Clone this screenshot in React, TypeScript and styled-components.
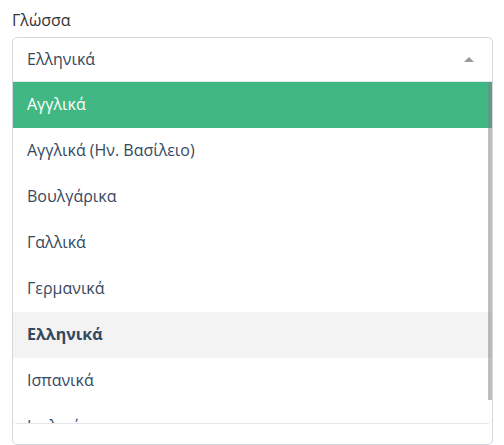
import React from "react";
import styled, { createGlobalStyle } from "styled-components";

const GlobalStyle = createGlobalStyle`
  html, body { margin: 0; padding: 0; background: #ffffff; }
  body { font-family: "Open Sans", "Noto Sans", sans-serif; }
`;

const Page = styled.div`
  width: 504px;
  height: 445px;
  box-sizing: border-box;
  padding: 10px 11px 0 12px;
  overflow: hidden;
`;

const Label = styled.label`
  display: block;
  font-size: 16px;
  line-height: 21px;
  color: #333333;
  margin-bottom: 6px;
`;

const Select = styled.div`
  position: relative;
  box-sizing: border-box;
  height: 408px;
  border: 1px solid #d3d8df;
  border-radius: 5px;
  display: flex;
  flex-direction: column;
`;

const Control = styled.div`
  height: 43px;
  box-sizing: border-box;
  flex: none;
  display: flex;
  align-items: center;
  justify-content: space-between;
  padding: 0 18px 2px 14px;
  border-bottom: 1px solid #e4e6ea;
  font-size: 16px;
  color: #35495e;
  height: 44px;
`;

const Caret = styled.span`
  width: 0;
  height: 0;
  margin-top: 2px;
  border-left: 5px solid transparent;
  border-right: 5px solid transparent;
  border-bottom: 5px solid #999999;
`;

const ListBox = styled.div`
  position: relative;
  flex: none;
  height: 341px;
  overflow: hidden;
  border-bottom: 1px solid #e4e6ea;
  border-radius: 0 0 5px 5px;
`;

const Option = styled.div<{ $highlight?: boolean; $selected?: boolean }>`
  height: 46px;
  box-sizing: border-box;
  display: flex;
  align-items: center;
  padding: 0 0 3px 14px;
  font-size: 16px;
  font-weight: ${(p) => (p.$selected ? 700 : 400)};
  color: ${(p) => (p.$highlight ? "#ffffff" : "#35495e")};
  background: ${(p) =>
    p.$highlight ? "#41b883" : p.$selected ? "#f3f3f3" : "transparent"};
`;

const Thumb = styled.div`
  position: absolute;
  top: 0;
  right: 0;
  width: 4px;
  height: 318px;
  background: rgba(128, 128, 128, 0.5);
`;

const options = [
  "Αγγλικά",
  "Αγγλικά (Ην. Βασίλειο)",
  "Βουλγάρικα",
  "Γαλλικά",
  "Γερμανικά",
  "Ελληνικά",
  "Ισπανικά",
  "Ιταλικά",
];

export default function App() {
  return (
    <>
      <GlobalStyle />
      <Page>
        <Label>Γλώσσα</Label>
        <Select>
          <Control>
            <span>Ελληνικά</span>
            <Caret />
          </Control>
          <ListBox>
            {options.map((o, i) => (
              <Option key={o} $highlight={i === 0} $selected={o === "Ελληνικά"}>
                {o}
              </Option>
            ))}
            <Thumb />
          </ListBox>
        </Select>
      </Page>
    </>
  );
}
